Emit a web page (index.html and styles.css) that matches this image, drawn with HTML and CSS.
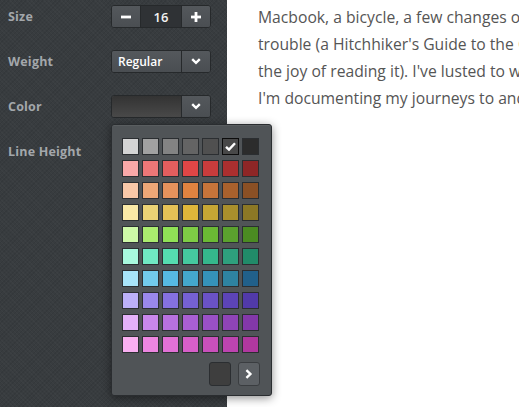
FILE: index.html
```html
<!DOCTYPE html>
<html>
<head>
<meta charset="utf-8">
<link rel="stylesheet" href="styles.css">
</head>
<body>
<div class="app">
  <aside class="sidebar">
    <div class="row">
      <span class="label">Size</span>
      <div class="stepper">
        <button class="step-btn"><svg width="10" height="10" viewBox="0 0 10 10"><rect x="0" y="3.6" width="10" height="2.8" fill="#fff"/></svg></button>
        <span class="step-value">16</span>
        <button class="step-btn"><svg width="10" height="10" viewBox="0 0 10 10"><rect x="0" y="3.6" width="10" height="2.8" fill="#fff"/><rect x="3.6" y="0" width="2.8" height="10" fill="#fff"/></svg></button>
      </div>
    </div>
    <div class="row">
      <span class="label">Weight</span>
      <div class="select">
        <span class="select-value">Regular</span>
        <span class="select-arrow"><svg width="10" height="7" viewBox="0 0 10 7"><path d="M1.2 1.2 L5 4.8 L8.8 1.2" fill="none" stroke="#fff" stroke-width="2.4"/></svg></span>
      </div>
    </div>
    <div class="row">
      <span class="label">Color</span>
      <div class="select">
        <span class="select-value color-value"></span>
        <span class="select-arrow"><svg width="10" height="7" viewBox="0 0 10 7"><path d="M1.2 1.2 L5 4.8 L8.8 1.2" fill="none" stroke="#fff" stroke-width="2.4"/></svg></span>
      </div>
    </div>
    <div class="row">
      <span class="label">Line Height</span>
    </div>
  </aside>
  <main class="content">
    <p class="line">Macbook, a bicycle, a few changes of clothes</p>
    <p class="line">trouble (a Hitchhiker's Guide to the Galaxy</p>
    <p class="line">the joy of reading it). I've lusted to wander</p>
    <p class="line">I'm documenting my journeys to and from</p>
  </main>
</div>

<div class="palette">
  <div class="swatches">
    <span class="sw" style="background:#d4d4d4"></span>
    <span class="sw" style="background:#a1a1a1"></span>
    <span class="sw" style="background:#838383"></span>
    <span class="sw" style="background:#646464"></span>
    <span class="sw" style="background:#505050"></span>
    <span class="sw selected" style="background:#484848"><svg width="11" height="9" viewBox="0 0 11 9"><path d="M1 4.8 L4 7.6 L10 1.2" fill="none" stroke="#fff" stroke-width="2.4"/></svg></span>
    <span class="sw" style="background:#2c2c2c"></span>

    <span class="sw" style="background:#f9a8a8"></span>
    <span class="sw" style="background:#ed7777"></span>
    <span class="sw" style="background:#e35e5e"></span>
    <span class="sw" style="background:#df4646"></span>
    <span class="sw" style="background:#c83c3c"></span>
    <span class="sw" style="background:#ab2f2f"></span>
    <span class="sw" style="background:#8e2626"></span>

    <span class="sw" style="background:#f9c8a8"></span>
    <span class="sw" style="background:#eda777"></span>
    <span class="sw" style="background:#e5925c"></span>
    <span class="sw" style="background:#e08340"></span>
    <span class="sw" style="background:#c6743a"></span>
    <span class="sw" style="background:#a9612d"></span>
    <span class="sw" style="background:#8b5025"></span>

    <span class="sw" style="background:#f9e8a6"></span>
    <span class="sw" style="background:#ebd275"></span>
    <span class="sw" style="background:#e4c156"></span>
    <span class="sw" style="background:#deb63a"></span>
    <span class="sw" style="background:#c5a634"></span>
    <span class="sw" style="background:#a98f2c"></span>
    <span class="sw" style="background:#8c7825"></span>

    <span class="sw" style="background:#cef9a7"></span>
    <span class="sw" style="background:#abec6e"></span>
    <span class="sw" style="background:#90e156"></span>
    <span class="sw" style="background:#7ecc45"></span>
    <span class="sw" style="background:#6bb934"></span>
    <span class="sw" style="background:#5ba12e"></span>
    <span class="sw" style="background:#4b8b22"></span>

    <span class="sw" style="background:#a8f9de"></span>
    <span class="sw" style="background:#70e8c3"></span>
    <span class="sw" style="background:#55ddb0"></span>
    <span class="sw" style="background:#45c99f"></span>
    <span class="sw" style="background:#35b78c"></span>
    <span class="sw" style="background:#2ea07d"></span>
    <span class="sw" style="background:#218b69"></span>

    <span class="sw" style="background:#a8e4f9"></span>
    <span class="sw" style="background:#72cbec"></span>
    <span class="sw" style="background:#56b9e2"></span>
    <span class="sw" style="background:#44a7cc"></span>
    <span class="sw" style="background:#3592b9"></span>
    <span class="sw" style="background:#2e83a1"></span>
    <span class="sw" style="background:#21608a"></span>

    <span class="sw" style="background:#bcb0f9"></span>
    <span class="sw" style="background:#9a88ec"></span>
    <span class="sw" style="background:#8571df"></span>
    <span class="sw" style="background:#7561d3"></span>
    <span class="sw" style="background:#6a52c6"></span>
    <span class="sw" style="background:#5c44b7"></span>
    <span class="sw" style="background:#513aa9"></span>

    <span class="sw" style="background:#e4b1f9"></span>
    <span class="sw" style="background:#c987ec"></span>
    <span class="sw" style="background:#b771df"></span>
    <span class="sw" style="background:#a95fd3"></span>
    <span class="sw" style="background:#9a50c6"></span>
    <span class="sw" style="background:#8f44b7"></span>
    <span class="sw" style="background:#8338a9"></span>

    <span class="sw" style="background:#f9aff1"></span>
    <span class="sw" style="background:#ed86e1"></span>
    <span class="sw" style="background:#e271d6"></span>
    <span class="sw" style="background:#d75fc9"></span>
    <span class="sw" style="background:#c950bb"></span>
    <span class="sw" style="background:#bd44b0"></span>
    <span class="sw" style="background:#b0389f"></span>
  </div>
  <div class="palette-foot">
    <span class="current"></span>
    <button class="next"><svg width="8" height="10" viewBox="0 0 8 10"><path d="M1.4 1.2 L5.4 5 L1.4 8.8" fill="none" stroke="#fff" stroke-width="2.4"/></svg></button>
  </div>
</div>
</body>
</html>
```

FILE: styles.css
```css
html, body {
  margin: 0;
  padding: 0;
  height: 100%;
  overflow: hidden;
}
body {
  background: #ffffff;
  font-family: "Open Sans", "Noto Sans", sans-serif;
}
.app {
  display: flex;
  height: 407px;
}
.sidebar {
  width: 227px;
  flex: 0 0 227px;
  box-sizing: border-box;
  padding: 5px 0 0 8px;
  display: flex;
  flex-direction: column;
  gap: 22px;
  background-color: #383c3f;
  background-image:
    repeating-linear-gradient(45deg, rgba(255,255,255,0.018) 0 1px, transparent 1px 3px),
    repeating-linear-gradient(-45deg, rgba(0,0,0,0.07) 0 1px, transparent 1px 3px);
}
.row {
  display: flex;
  align-items: center;
  height: 23px;
}
.label {
  width: 103px;
  flex: 0 0 103px;
  color: #a3a7ab;
  font-weight: 700;
  font-size: 12.5px;
  letter-spacing: 0.2px;
}
.stepper, .select {
  display: flex;
  width: 100px;
  height: 23px;
  box-sizing: border-box;
  border: 1px solid #26292b;
  border-radius: 3px;
  overflow: hidden;
  background: #4b4f53;
}
.step-btn {
  width: 28px;
  flex: 0 0 28px;
  border: 0;
  margin: 0;
  padding: 0;
  background: linear-gradient(#54585c, #4a4e52);
  display: flex;
  align-items: center;
  justify-content: center;
}
.step-value {
  flex: 1;
  background: #2f3235;
  color: #f2f2f2;
  font-size: 13px;
  font-weight: 600;
  display: flex;
  align-items: center;
  justify-content: center;
  border-left: 1px solid #26292b;
  border-right: 1px solid #26292b;
}
.select-value {
  flex: 1;
  color: #ffffff;
  font-size: 12px;
  font-weight: 600;
  display: flex;
  align-items: center;
  padding-left: 6px;
  background: linear-gradient(#54585c, #4a4e52);
  border-right: 1px solid #26292b;
}
.color-value {
  background: linear-gradient(#333333, #494949);
  padding-left: 0;
}
.select-arrow {
  width: 28px;
  flex: 0 0 28px;
  display: flex;
  align-items: center;
  justify-content: center;
  background: linear-gradient(#54585c, #4a4e52);
}
.content {
  flex: 1;
  min-width: 0;
  overflow: hidden;
  padding: 4px 0 0 31px;
  color: #555555;
  font-size: 15.7px;
  line-height: 27px;
}
.line {
  margin: 0;
  white-space: nowrap;
}
.palette {
  position: absolute;
  left: 111px;
  top: 124px;
  width: 161px;
  height: 272px;
  box-sizing: border-box;
  padding: 13px 0 0 10px;
  background: #505457;
  border: 1px solid #2a2d30;
  border-radius: 3px;
  box-shadow: 0 2px 10px rgba(0,0,0,0.45), inset 0 1px 0 rgba(255,255,255,0.06);
}
.swatches {
  display: grid;
  grid-template-columns: repeat(7, 17px);
  grid-auto-rows: 17px;
  column-gap: 3px;
  row-gap: 5px;
}
.sw {
  box-sizing: border-box;
  border: 1px solid #2b2e31;
  display: flex;
  align-items: center;
  justify-content: center;
}
.sw.selected {
  border: 1px solid #0c0c0c;
}
.palette-foot {
  display: flex;
  justify-content: flex-end;
  gap: 7px;
  margin-top: 9px;
  padding-right: 11px;
}
.current {
  width: 22px;
  height: 24px;
  box-sizing: border-box;
  background: #3e3e3e;
  border: 1px solid #2b2e31;
  border-radius: 3px;
}
.next {
  width: 22px;
  height: 24px;
  box-sizing: border-box;
  margin: 0;
  padding: 0;
  background: #5c6064;
  border: 1px solid #3a3d40;
  border-radius: 3px;
  display: flex;
  align-items: center;
  justify-content: center;
}
```
